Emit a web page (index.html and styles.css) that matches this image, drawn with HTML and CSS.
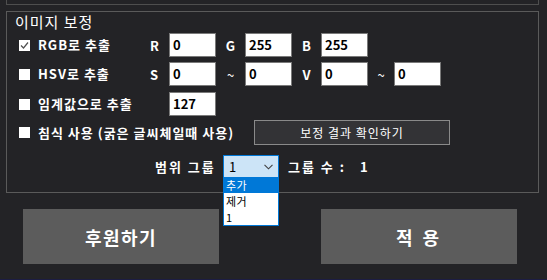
FILE: index.html
```html
<!DOCTYPE html>
<html>
<head>
<meta charset="utf-8">
<link rel="stylesheet" href="styles.css">
</head>
<body class="panel">
  <div class="top-box"></div>

  <div class="group">
    <div class="group-title">이미지 보정</div>

    <div class="row row-1">
      <div class="opt">
        <span class="check checked">
          <svg width="11" height="11" viewBox="0 0 11 11"><polyline points="2,5.5 4.5,8 9,2.5" fill="none" stroke="#505050" stroke-width="1.2"/></svg>
        </span>
        <span class="opt-text">RGB로 추출</span>
      </div>
      <span class="lbl lbl-first">R</span>
      <div class="field">0</div>
      <span class="lbl lbl-mid">G</span>
      <div class="field">255</div>
      <span class="lbl lbl-mid">B</span>
      <div class="field">255</div>
    </div>

    <div class="row row-2">
      <div class="opt">
        <span class="check"></span>
        <span class="opt-text">HSV로 추출</span>
      </div>
      <span class="lbl lbl-first">S</span>
      <div class="field">0</div>
      <span class="lbl lbl-mid tilde">~</span>
      <div class="field">0</div>
      <span class="lbl lbl-mid">V</span>
      <div class="field">0</div>
      <span class="lbl lbl-tilde tilde">~</span>
      <div class="field">0</div>
    </div>

    <div class="row row-3">
      <div class="opt">
        <span class="check"></span>
        <span class="opt-text">임계값으로 추출</span>
      </div>
      <span class="lbl lbl-first"></span>
      <div class="field">127</div>
    </div>

    <div class="row row-4">
      <div class="opt opt-wide">
        <span class="check"></span>
        <span class="opt-text">침식 사용 (굵은 글씨체일때 사용)</span>
      </div>
      <button class="check-btn">보정 결과 확인하기</button>
    </div>

    <div class="row row-5">
      <span class="range-label">범위 그룹</span>
      <div class="combo">
        <div class="combo-box">
          <span>1</span>
          <svg width="9" height="6" viewBox="0 0 9 6"><polyline points="0.5,0.8 4.5,4.8 8.5,0.8" fill="none" stroke="#404040" stroke-width="1.1"/></svg>
        </div>
        <ul class="combo-list">
          <li class="selected">추가</li>
          <li>제거</li>
          <li>1</li>
        </ul>
      </div>
      <span class="count-label">그룹 수 :</span>
      <span class="count-value">1</span>
    </div>
  </div>

  <div class="actions">
    <button class="big-btn">후원하기</button>
    <button class="big-btn apply">적 용</button>
  </div>

  <div class="bottom-line"></div>
</body>
</html>
```

FILE: styles.css
```css
/* dark settings panel */
* {
  box-sizing: border-box;
}

.panel {
  margin: 0;
  width: 547px;
  height: 280px;
  overflow: hidden;
  background: #232326;
  color: #fff;
  font-family: "Noto Sans CJK KR", "Noto Sans", sans-serif;
  font-size: 13px;
}

.top-box {
  margin-left: 6px;
  width: 533px;
  height: 5px;
  border: 1px solid #4e4e4e;
  border-top: none;
}

.group {
  margin: 6px 0 0 6px;
  width: 533px;
  height: 182px;
  border: 1px solid #5a5a5a;
  padding-left: 12px;
  position: relative;
}

.group-title {
  font-size: 15px;
  line-height: 20px;
  height: 20px;
  margin-left: -4px;
  margin-bottom: 1px;
  letter-spacing: 1px;
}

.row {
  display: flex;
  align-items: center;
  height: 24px;
}
.row-2 { margin-top: 5px; }
.row-3 { margin-top: 6px; }
.row-4 { margin-top: 4px; height: 25px; }
.row-5 { margin-top: 10px; height: 23px; }

.opt {
  width: 131px;
  display: flex;
  align-items: center;
  font-weight: bold;
  letter-spacing: 1px;
}
.opt-wide {
  width: 235px;
}
.opt-text {
  line-height: 16px;
  white-space: nowrap;
}

.check {
  width: 11px;
  height: 11px;
  background: #fff;
  margin-right: 8px;
  display: flex;
}

.lbl {
  font-weight: bold;
  text-align: center;
  width: 29px;
}
.lbl-first {
  width: 19px;
  text-align: left;
}
.lbl-tilde {
  width: 26px;
}
.tilde {
  font-weight: normal;
}

.field {
  width: 47px;
  height: 24px;
  background: #fff;
  border: 1px solid #7a7a7a;
  color: #000;
  font-weight: bold;
  line-height: 22px;
  padding-left: 3px;
}

.check-btn {
  width: 196px;
  height: 25px;
  margin-top: -1px;
  background: #333336;
  border: 1px solid #8a8a8a;
  color: #fff;
  font-family: inherit;
  font-size: 12px;
  letter-spacing: 1px;
  padding: 0;
}

.range-label {
  margin-left: 136px;
  width: 68px;
  font-weight: bold;
  letter-spacing: 2px;
}

.combo {
  position: relative;
  width: 56px;
  height: 23px;
}
.combo-box {
  height: 23px;
  background: #cce4f7;
  border: 1px solid #0078d7;
  color: #000;
  display: flex;
  align-items: center;
  justify-content: space-between;
  padding: 0 5px 0 5px;
}
.combo-list {
  position: absolute;
  left: 0;
  top: 22px;
  width: 56px;
  margin: 0;
  padding: 0;
  list-style: none;
  background: #fff;
  border: 1px solid #0078d7;
  border-top: none;
  color: #000;
  font-size: 11px;
  z-index: 2;
}
.combo-list li {
  height: 16px;
  line-height: 16px;
  padding-left: 2px;
  letter-spacing: 0.5px;
}
.combo-list .selected {
  background: #0078d7;
  color: #fff;
}

.count-label {
  margin-left: 9px;
  width: 72px;
  font-weight: bold;
  letter-spacing: 2px;
}
.count-value {
  font-weight: bold;
}

.actions {
  display: flex;
  gap: 102px;
  padding-left: 23px;
  margin-top: 16px;
}
.big-btn {
  width: 196px;
  height: 55px;
  background: #5c5c5c;
  border: none;
  color: #fff;
  font-family: inherit;
  font-size: 18px;
  font-weight: bold;
  letter-spacing: 1.5px;
  padding: 0;
}
.apply {
  letter-spacing: 3px;
}

.bottom-line {
  margin-top: 15px;
  height: 1px;
  background: #1c1d44;
}
```
